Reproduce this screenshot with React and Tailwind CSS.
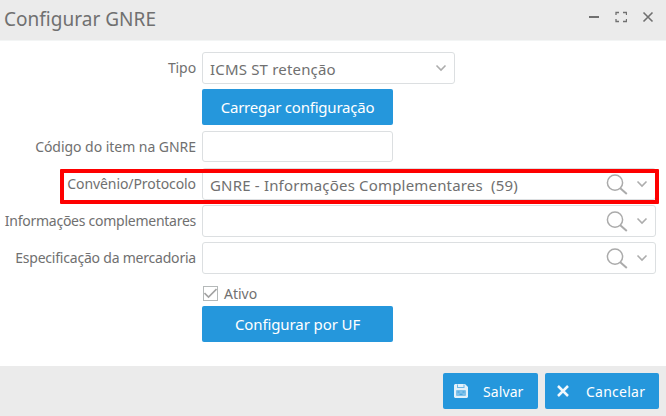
import React, { useState } from "react";

const ChevronIcon = () => (
  <svg width="12" height="8" viewBox="0 0 12 8" fill="none">
    <path d="M1.5 1.5L6 6L10.5 1.5" stroke="#adadad" strokeWidth="1.6" />
  </svg>
);

const SearchIcon = () => (
  <svg width="22" height="22" viewBox="0 0 22 22" fill="none" stroke="#ababab">
    <circle cx="9" cy="8.7" r="7.6" strokeWidth="1.5" />
    <path d="M14 14L20.8 20" strokeWidth="2" />
  </svg>
);

const SaveIcon = () => (
  <svg width="14" height="14" viewBox="0 0 14 14">
    <path d="M1 0H11L14 3V13L13 14H1L0 13V1Z" fill="#e2f1fa" />
    <path d="M3 0.5H4V3.5H3ZM9.5 0.5H10.5V3.5H9.5ZM3 3H10.5V4H3Z" fill="#6cb8e7" />
    <rect x="2" y="6" width="10" height="6" rx="1" fill="#7fc1ea" />
    <path d="M3.5 8H5.5M8.5 8H10.5M5.5 10.3H8.5" stroke="#3c9fdc" />
  </svg>
);

const Row = ({ label, spacing = "tracking-[-0.04px]", children }) => (
  <div className="flex">
    <div
      className={`w-[196px] mr-1.5 pt-[5px] shrink-0 text-right whitespace-nowrap text-[14px] leading-[22px] ${spacing}`}
    >
      {label}
    </div>
    {children}
  </div>
);

const LookupField = ({ value }) => (
  <div className="flex w-[454px] h-8 border border-[#dcdfe1] rounded-[3px] pl-[7px]">
    <span className="flex-1 pt-[5px] text-[15px] leading-[22px] tracking-[0.18px] whitespace-pre">
      {value}
    </span>
    <span className="mt-[5px] mr-2">
      <SearchIcon />
    </span>
    <span className="mt-[11px] mr-[7px]">
      <ChevronIcon />
    </span>
  </div>
);

const App = () => {
  const [active, setActive] = useState(true);

  return (
    <div className="relative flex flex-col w-[666px] h-[416px] bg-white text-[#707070] font-['Noto_Sans','Open_Sans',sans-serif] overflow-hidden">
      <div className="flex justify-between h-[41px] shrink-0 bg-[#ebebeb] border-b border-[#f3f5f5] pl-1 pr-3">
        <h1 className="text-[19px] leading-[38px] tracking-[0.02px]">
          Configurar GNRE
        </h1>
        <div className="flex mt-[11px] gap-[15px]">
          <svg width="12" height="12" viewBox="0 0 12 12">
            <path d="M1 6H11" stroke="#707070" strokeWidth="2" />
          </svg>
          <svg width="12" height="12" viewBox="0 0 12 12" fill="none">
            <path
              d="M1 4V1.5H4M8 1.5H11.5V4M11.5 8V10.5H8M4 10.5H1V8"
              stroke="#707070"
              strokeWidth="1.3"
            />
          </svg>
          <svg width="12" height="12" viewBox="0 0 12 12">
            <path
              d="M1.5 1.5L10.5 10.5M10.5 1.5L1.5 10.5"
              stroke="#707070"
              strokeWidth="1.6"
            />
          </svg>
        </div>
      </div>

      <div className="flex-1 pt-[11px]">
        <Row label="Tipo" spacing="tracking-[-0.1px]">
          <div className="flex justify-between w-[253px] h-8 border border-[#dcdfe1] rounded-[3px] pl-[7px] pr-[7px]">
            <span className="pt-[5px] text-[15px] leading-[22px] tracking-[0.18px]">
              ICMS ST retenção
            </span>
            <span className="mt-[11px]">
              <ChevronIcon />
            </span>
          </div>
        </Row>
        <button className="block ml-[202px] mt-[5px] w-[191px] h-9 rounded-[2px] bg-[#2597dc] text-white text-[15px] tracking-[-0.22px]">
          Carregar configuração
        </button>
        <div className="mt-1.5">
          <Row label="Código do item na GNRE">
            <div className="w-[191px] h-[31px] border border-[#dcdfe1] rounded-[3px]" />
          </Row>
        </div>
        <div className="flex flex-col gap-[5px] mt-1.5">
          <Row label="Convênio/Protocolo" spacing="tracking-[-0.08px]">
            <LookupField value="GNRE - Informações Complementares  (59)" />
          </Row>
          <Row label="Informações complementares" spacing="tracking-[-0.26px]">
            <LookupField />
          </Row>
          <Row label="Especificação da mercadoria" spacing="tracking-[-0.21px]">
            <LookupField />
          </Row>
        </div>
        <div
          className="flex items-center gap-1.5 ml-[203px] mt-[8px] h-[22px] cursor-pointer"
          onClick={() => setActive(!active)}
        >
          <span className="w-[15px] h-[15px] border-[1.5px] border-[#b5b9b9]">
            {active && (
              <svg width="13" height="13" viewBox="0 0 13 13" fill="none">
                <path d="M0.5 6L4.5 10L12.5 2" stroke="#a3a3a3" strokeWidth="1.6" />
              </svg>
            )}
          </span>
          <span className="text-[14px]">Ativo</span>
        </div>
        <button className="block ml-[202px] mt-[2px] w-[191px] h-9 rounded-[2px] bg-[#2597dc] text-white text-[15px] tracking-[-0.1px]">
          Configurar por UF
        </button>
      </div>

      <div className="flex justify-end gap-[7px] h-[50px] shrink-0 bg-[#ebebeb] pt-[7px] pr-[7px]">
        <button className="flex items-center w-[95px] h-9 pl-[11px] gap-[15px] rounded-[2px] bg-[#2597dc] text-white text-[14px] tracking-[0.1px]">
          <SaveIcon />
          Salvar
        </button>
        <button className="flex items-center w-[114px] h-9 pl-3 gap-[17px] rounded-[2px] bg-[#2597dc] text-white text-[14px] tracking-[0.25px]">
          <svg width="12" height="12" viewBox="0 0 12 12">
            <path d="M1 1L11 11M11 1L1 11" stroke="#f2f8fc" strokeWidth="2.5" />
          </svg>
          Cancelar
        </button>
      </div>

      {/* Highlight over the Convênio/Protocolo row */}
      <div className="absolute left-[60px] top-[169px] w-[599px] h-[35px] border-x-4 border-y-4 border-[#fe0000] rounded-[1px] pointer-events-none" />
    </div>
  );
};

export default App;
